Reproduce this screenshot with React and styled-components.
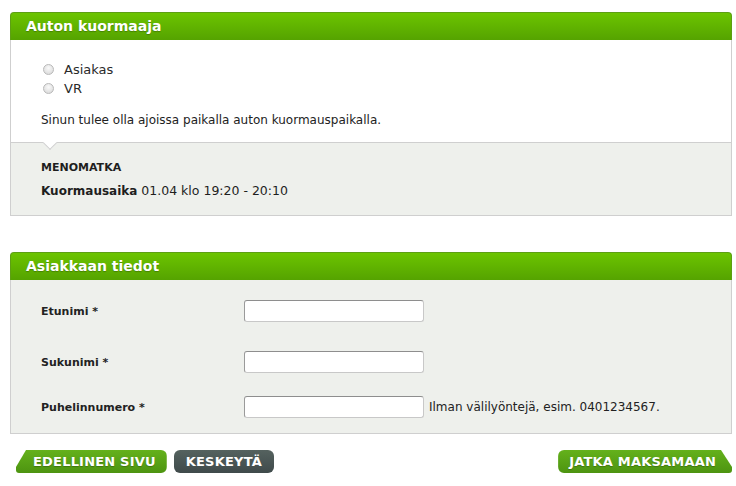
import React from 'react';
import styled, { createGlobalStyle } from 'styled-components';

const Global = createGlobalStyle`
  html, body { margin: 0; padding: 0; background: #fff; }
  body { font-family: "DejaVu Sans", Verdana, sans-serif; color: #1e1e1e; }
`;

const Page = styled.div`
  width: 722px;
  padding: 12px 0 0 10px;
  display: flex;
  flex-direction: column;
`;

const Panel = styled.section`
  display: flex;
  flex-direction: column;
  margin-bottom: ${p => p.$mb || 0}px;
`;

const Header = styled.h2`
  margin: 0;
  height: 28px;
  box-sizing: border-box;
  padding: 0 15px;
  border-radius: 4px 4px 0 0;
  background: linear-gradient(#6cc400, #55a300);
  border: 1px solid #5d9f14;
  border-bottom: none;
  color: #fff;
  font-size: 14px;
  font-weight: bold;
  line-height: 27px;
  text-shadow: 0 1px 1px rgba(0, 0, 0, 0.25);
`;

const WhiteBody = styled.div`
  position: relative;
  background: #fff;
  border-left: 1px solid #cfcfcf;
  border-right: 1px solid #cfcfcf;
  border-bottom: 1px solid #cfcfcf;
  padding: 20px 30px 14px;
  &::after {
    content: "";
    position: absolute;
    left: 34px;
    bottom: -6px;
    width: 9px;
    height: 9px;
    background: #fff;
    border-right: 1px solid #cfcfcf;
    border-bottom: 1px solid #cfcfcf;
    transform: rotate(45deg);
  }
`;

const RadioList = styled.div`
  display: flex;
  flex-direction: column;
  margin-bottom: 14px;
`;

const RadioRow = styled.label`
  display: flex;
  align-items: center;
  height: 19px;
  font-size: 13px;
  color: #2a2a2a;
`;

const RadioDot = styled.span`
  width: 11px;
  height: 11px;
  box-sizing: border-box;
  border-radius: 50%;
  margin: 0 10px 0 2px;
  border: 1px solid #b9b9b9;
  background: radial-gradient(circle at 50% 35%, #fafafa 0%, #dcdcdc 80%);
`;

const Note = styled.p`
  margin: 0;
  font-size: 12px;
  line-height: 16px;
  color: #222;
`;

const GrayBody = styled.div`
  background: #eef0ec;
  border: 1px solid #cfcfcf;
  border-top: none;
  padding: ${p => p.$pad};
  display: flex;
  flex-direction: column;
`;

const SubTitle = styled.div`
  font-size: 11px;
  font-weight: bold;
  line-height: 14px;
  margin-bottom: 8px;
`;

const InfoLine = styled.div`
  font-size: 12.5px;
  line-height: 16px;
  b { font-weight: bold; font-size: 12px; }
`;

const FormRow = styled.div`
  display: grid;
  grid-template-columns: 203px auto auto;
  align-items: center;
  justify-content: start;
  margin-top: ${p => p.$mt}px;
`;

const Label = styled.label`
  font-size: 11px;
  font-weight: bold;
  color: #222;
`;

const Input = styled.input`
  width: 180px;
  height: 22px;
  box-sizing: border-box;
  border: 1px solid #c8c8c8;
  border-top-color: #8e8e8e;
  border-left-color: #9a9a9a;
  border-radius: 3px;
  background: #fff;
  padding: 0 4px;
  font: inherit;
  outline: none;
`;

const Hint = styled.span`
  font-size: 12px;
  margin-left: 5px;
  color: #222;
`;

const ButtonBar = styled.div`
  display: flex;
  align-items: center;
  gap: 7px;
  margin-top: 16px;
  padding-left: 6px;
`;

const GreenButton = styled.button`
  height: 23px;
  border: none;
  padding: ${p => (p.$dir === 'left' ? '0 11px 0 17px' : '0 16px 0 11px')};
  margin-left: ${p => (p.$push ? 'auto' : '0')};
  background: linear-gradient(#64b11c, #4d9410);
  color: #fff;
  font-family: "DejaVu Sans", Verdana, sans-serif;
  font-size: 13px;
  font-weight: bold;
  letter-spacing: 0.2px;
  text-shadow: 0 1px 1px rgba(0, 0, 0, 0.25);
  border-radius: ${p => (p.$dir === 'left' ? '0 6px 6px 3px' : '6px 0 3px 6px')};
  clip-path: ${p =>
    p.$dir === 'left'
      ? 'polygon(10px 0, 100% 0, 100% 100%, 0 100%, 0 calc(100% - 6px))'
      : 'polygon(0 0, calc(100% - 11px) 0, 100% calc(100% - 6px), 100% 100%, 0 100%)'};
  cursor: pointer;
`;

const DarkButton = styled.button`
  height: 23px;
  border: none;
  padding: 0 12px;
  border-radius: 6px;
  background: linear-gradient(#55625f, #3f4a4b);
  color: #fff;
  font-family: "DejaVu Sans", Verdana, sans-serif;
  font-size: 13px;
  font-weight: bold;
  letter-spacing: 0.2px;
  cursor: pointer;
`;

export default function App() {
  return (
    <>
      <Global />
      <Page>
        <Panel $mb={36}>
          <Header>Auton kuormaaja</Header>
          <WhiteBody>
            <RadioList>
              <RadioRow><RadioDot />Asiakas</RadioRow>
              <RadioRow><RadioDot />VR</RadioRow>
            </RadioList>
            <Note>Sinun tulee olla ajoissa paikalla auton kuormauspaikalla.</Note>
          </WhiteBody>
          <GrayBody $pad="18px 30px 16px">
            <SubTitle>MENOMATKA</SubTitle>
            <InfoLine><b>Kuormausaika</b> 01.04 klo 19:20 - 20:10</InfoLine>
          </GrayBody>
        </Panel>
        <Panel>
          <Header>Asiakkaan tiedot</Header>
          <GrayBody $pad="0 30px 15px">
            <FormRow $mt={20}>
              <Label>Etunimi *</Label>
              <Input />
            </FormRow>
            <FormRow $mt={29}>
              <Label>Sukunimi *</Label>
              <Input />
            </FormRow>
            <FormRow $mt={23}>
              <Label>Puhelinnumero *</Label>
              <Input />
              <Hint>Ilman välilyöntejä, esim. 0401234567.</Hint>
            </FormRow>
          </GrayBody>
        </Panel>
        <ButtonBar>
          <GreenButton $dir="left">EDELLINEN SIVU</GreenButton>
          <DarkButton>KESKEYTÄ</DarkButton>
          <GreenButton $dir="right" $push>JATKA MAKSAMAAN</GreenButton>
        </ButtonBar>
      </Page>
    </>
  );
}
